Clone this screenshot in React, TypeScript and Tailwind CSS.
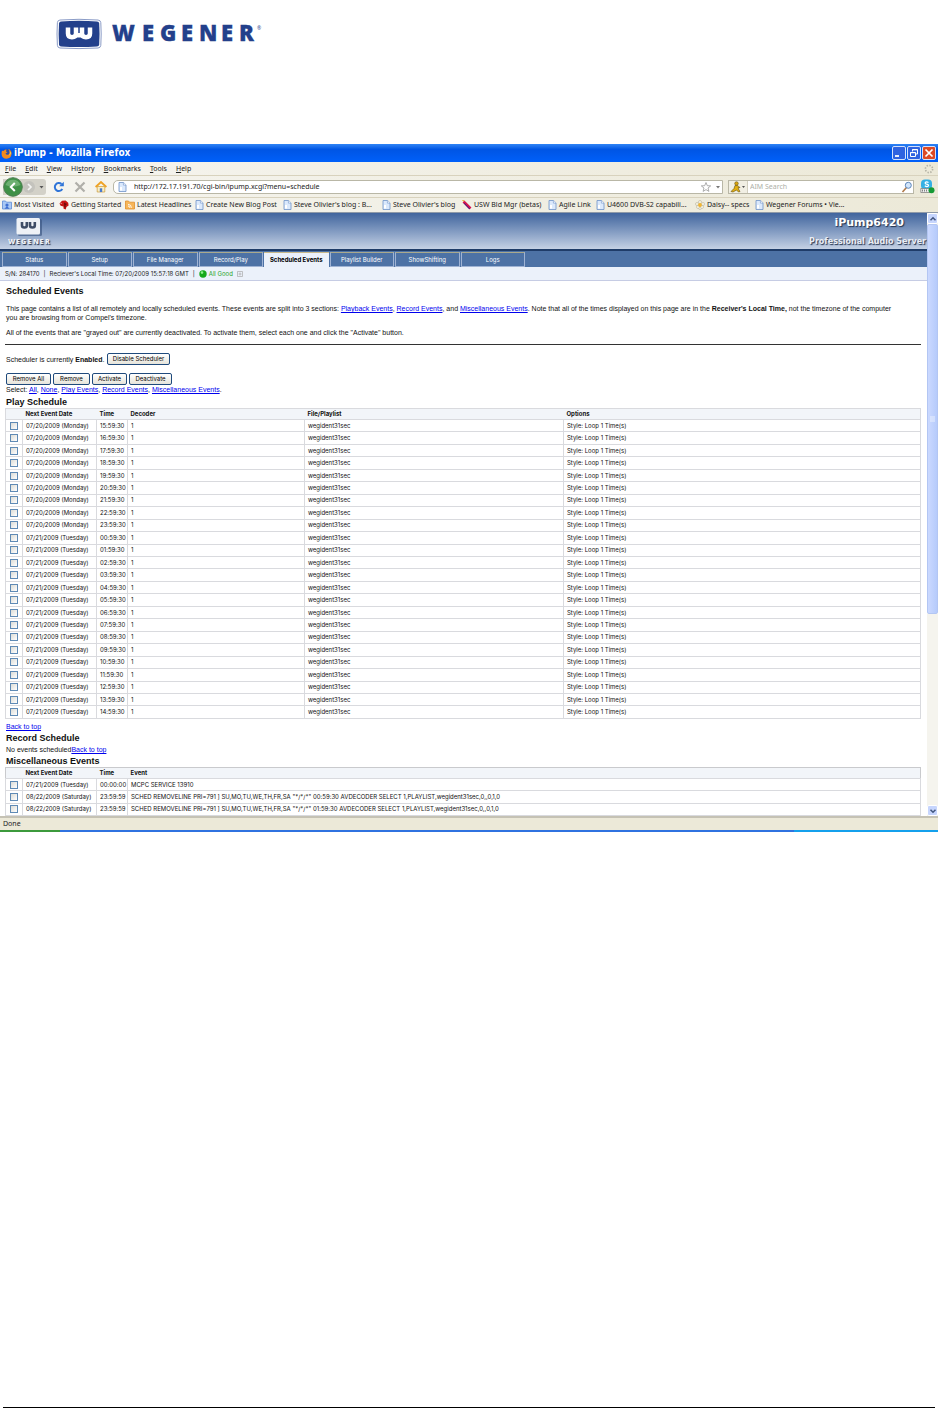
import type { ReactNode } from "react";

const menus = [
  { before: "", key: "F", after: "ile" },
  { before: "", key: "E", after: "dit" },
  { before: "", key: "V", after: "iew" },
  { before: "Hi", key: "s", after: "tory" },
  { before: "", key: "B", after: "ookmarks" },
  { before: "", key: "T", after: "ools" },
  { before: "", key: "H", after: "elp" },
];

const tabs = ["Status", "Setup", "File Manager", "Record/Play", "Scheduled Events", "Playlist Builder", "ShowShifting", "Logs"];

const playEvents = Array.from({ length: 24 }, (_, i) => {
  const hour = (15 + i) % 24;
  return {
    id: i,
    date: i < 9 ? "07/20/2009 (Monday)" : "07/21/2009 (Tuesday)",
    time: `${String(hour).padStart(2, "0")}:59:30`,
  };
});

const miscEvents = [
  { date: "07/21/2009 (Tuesday)", time: "00:00:00", event: "MCPC SERVICE 13910" },
  {
    date: "08/22/2009 (Saturday)",
    time: "23:59:59",
    event: 'SCHED REMOVELINE PRI=791 ] SU,MO,TU,WE,TH,FR,SA "*/*/*" 00:59:30 AVDECODER SELECT 1,PLAYLIST,wegident31sec,0,,0,1,0',
  },
  {
    date: "08/22/2009 (Saturday)",
    time: "23:59:59",
    event: 'SCHED REMOVELINE PRI=791 ] SU,MO,TU,WE,TH,FR,SA "*/*/*" 01:59:30 AVDECODER SELECT 1,PLAYLIST,wegident31sec,0,,0,1,0',
  },
];

function PageIcon() {
  return (
    <svg viewBox="0 0 9 10" className="h-[10px] w-[9px] shrink-0">
      <path d="M1 .5h4.6L8 2.9v6.6H1z" fill="#dbe9fc" stroke="#6f93c8" strokeWidth=".8" />
      <path d="M5.4.6v2.5H8" fill="#fff" stroke="#6f93c8" strokeWidth=".6" />
      <path d="M2 5h2v3.6H2z" fill="#fff" />
    </svg>
  );
}

function FolderIcon() {
  return (
    <svg viewBox="0 0 10 10" className="h-[10px] w-[10px] shrink-0">
      <path d="M.5 1h3l1 1.2h5V9h-9z" fill="#a9c8f5" stroke="#5b8bd6" strokeWidth=".8" />
      <circle cx="5" cy="5" r="1.6" fill="#3f6fd0" />
      <path d="M2.5 8.8 5 6l2.5 2.8z" fill="#3f6fd0" />
    </svg>
  );
}

function DinoIcon() {
  return (
    <svg viewBox="0 0 10 10" className="h-[10px] w-[10px] shrink-0">
      <path d="M.5 3.4 3 .8 6.6.6l2.6 2.2.4 2.6L7.4 7l-.6 2.4L4.6 8.8 4.4 6.4 1.6 5.8z" fill="#c81414" />
      <path d="M5 2.5 8 4 6.5 5.2 6.8 7.5 5.4 7.4 5.2 5z" fill="#6a0c0c" />
      <path d="M1.5 3.4h1.6" stroke="#fff" strokeWidth=".5" />
    </svg>
  );
}

function FeedIcon() {
  return (
    <svg viewBox="0 0 10 10" className="h-[10px] w-[10px] shrink-0">
      <path d="M.5 1h3l1 1.2h5V9h-9z" fill="#f7b65a" stroke="#e0902e" strokeWidth=".8" />
      <path d="M3 4.4a3.4 3.4 0 0 1 3.4 3.4M3 6a1.8 1.8 0 0 1 1.8 1.8" fill="none" stroke="#fff" strokeWidth=".9" />
    </svg>
  );
}

function PenIcon() {
  return (
    <svg viewBox="0 0 10 10" className="h-[10px] w-[10px] shrink-0">
      <path d="M1.5 1.5 8.5 8.5" stroke="#d4124e" strokeWidth="2.6" />
      <path d="M2 3.2 7.6 9" stroke="#2b1a8c" strokeWidth="1" />
      <path d="M.4.4 2.4 1" stroke="#e6a51e" strokeWidth="1" />
    </svg>
  );
}

function FlowerIcon() {
  return (
    <svg viewBox="0 0 10 10" className="h-[10px] w-[10px] shrink-0">
      <g fill="#fbf8ea" stroke="#a8a48c" strokeWidth=".5">
        <circle cx="5" cy="2" r="1.5" />
        <circle cx="5" cy="8" r="1.5" />
        <circle cx="2" cy="4" r="1.5" />
        <circle cx="8" cy="4" r="1.5" />
        <circle cx="3" cy="7" r="1.5" />
        <circle cx="7" cy="7" r="1.5" />
      </g>
      <circle cx="5" cy="5" r="1.9" fill="#f2b632" />
    </svg>
  );
}

const bookmarks = [
  { label: "Most Visited", icon: <FolderIcon />, width: "w-[57px]" },
  { label: "Getting Started", icon: <DinoIcon />, width: "w-[66px]" },
  { label: "Latest Headlines", icon: <FeedIcon />, width: "w-[70px]" },
  { label: "Create New Blog Post", icon: <PageIcon />, width: "w-[88px]" },
  { label: "Steve Olivier's blog : B...", icon: <PageIcon />, width: "w-[99px]" },
  { label: "Steve Olivier's blog", icon: <PageIcon />, width: "w-[80px]" },
  { label: "USW Bld Mgr (betas)", icon: <PenIcon />, width: "w-[86px]" },
  { label: "Agile Link", icon: <PageIcon />, width: "w-[48px]" },
  { label: "U4600 DVB-S2 capabili...", icon: <PageIcon />, width: "w-[99px]" },
  { label: "Daisy-- specs", icon: <FlowerIcon />, width: "w-[60px]" },
  { label: "Wegener Forums • Vie...", icon: <PageIcon />, width: "w-[99px]" },
];

function Logo() {
  return (
    <svg viewBox="0 0 206 30" className="h-[30px] w-[206px] overflow-visible" role="img" aria-label="Wegener">
      <path d="M3 1Q22-.4 41 1q2.600.2 2.800 2.600.8 11.400 0 22.800Q43.600 28.800 41 29 22 30.200 3 29 .6 28.800.4 26.400-.4 15 .4 3.600.6 1.200 3 1z" fill="#fff" stroke="#7d90bf" strokeWidth=".9" />
      <path d="M4 2.500Q22 1.200 40 2.500q2 .2 2.200 2 .7 10.500 0 21-.2 1.900-2.200 2.100Q22 28.600 4 27.600 2.200 27.400 2 25.500 1.300 15 2 4.500 2.200 2.700 4 2.500z" fill="#23408b" />
      <g fill="none" stroke="#fff" strokeWidth="4.500">
        <path d="M11 8.500v6q0 3.700 4 3.700t4-3.700v-6" />
        <path d="M25 8.500v6q0 3.700 4 3.700t4-3.700v-6" />
      </g>
      <path d="M19 14h6v4.500h-6z" fill="#fff" />
      <text
        x="55 85 103 124 142 164 182"
        y="22"
        fill="#23408b"
        stroke="#23408b"
        strokeWidth=".3"
        fontFamily="Open Sans, Noto Sans, sans-serif"
        fontWeight="800"
        fontSize="22"
      >
        WEGENER
      </text>
      <text x="200" y="11" fill="#23408b" fontFamily="Open Sans, sans-serif" fontSize="5">
        ®
      </text>
    </svg>
  );
}

function FirefoxIcon() {
  return (
    <svg viewBox="0 0 11 11" className="h-[11px] w-[11px]">
      <circle cx="5.5" cy="5.5" r="4.3" fill="#2b4fa8" />
      <path d="M1 2.500Q2.500 3.500 3 2.600q1-1.400 2.500-1.200L5 3.500l1.500 1-2 .8q.6 1.900 2.500 1.500 2.200-.8 1.500-3.800Q7.800 1.500 7 .8q3.600 1.400 3.600 5Q10 10.600 5.500 10.700 1 10.500.6 6.200.5 4 1 2.500z" fill="#f08a1d" />
      <path d="M8.500 3q1 3-1 4.500 2.600-.4 2.500-3z" fill="#fbd04a" />
    </svg>
  );
}

function WindowButton({ label, color, children }: { label: string; color: string; children: ReactNode }) {
  return (
    <button aria-label={label} className={`flex h-[14px] w-[14px] items-center justify-center rounded-[2px] border border-[#d5e1fb] ${color}`}>
      <svg viewBox="0 0 12 12" className="h-3 w-3" fill="none" stroke="#fff">
        {children}
      </svg>
    </button>
  );
}

function TitleBar() {
  return (
    <div className="flex h-[18px] items-center bg-linear-to-b from-[#2f84f5] via-[#0055e4] via-30% to-[#0060fa] px-px">
      <FirefoxIcon />
      <h1 className="ml-[2px] flex-1 font-['DejaVu_Sans_Condensed','DejaVu_Sans',sans-serif] text-[10px] font-bold text-white">iPump - Mozilla Firefox</h1>
      <div className="flex gap-px pr-px">
        <WindowButton label="Minimize" color="bg-[#2f63e0]">
          <path d="M2 9h4" strokeWidth="1.8" />
        </WindowButton>
        <WindowButton label="Restore" color="bg-[#2f63e0]">
          <path d="M4.5 4.500v-2h5v4.500h-2M2.500 5.500h5v4h-5zM4.500 2.800h5M2.500 5.700h5" />
        </WindowButton>
        <WindowButton label="Close" color="bg-[#dd4a25]">
          <path d="m2.500 2.500 7 7m0-7-7 7" strokeWidth="1.7" />
        </WindowButton>
      </div>
    </div>
  );
}

function MenuBar() {
  return (
    <div className="flex h-[14px] items-center justify-between border-b border-[#d8d2bd] pr-1 pl-[5px]">
      <div className="flex gap-[9px]">
        {menus.map((menu) => (
          <button key={menu.key + menu.after}>
            {menu.before}
            <u>{menu.key}</u>
            {menu.after}
          </button>
        ))}
      </div>
      <svg viewBox="0 0 10 10" className="h-[10px] w-[10px]">
        <circle cx="5" cy="5" r="3.6" fill="none" stroke="#b5b3a6" strokeWidth="1.6" strokeDasharray="1.4 1.42" />
      </svg>
    </div>
  );
}

function NavBar() {
  return (
    <div className="flex h-[22px] items-center border-b border-[#d8d2bd] px-[3px]">
      <div className="flex h-4 w-[43px] items-center rounded-r-[3px] bg-[#d3d1c8]">
        <button aria-label="Back">
          <svg viewBox="0 0 20 20" className="h-5 w-5">
            <circle cx="10" cy="10" r="9.3" fill="#3f9147" stroke="#4d7d50" />
            <path d="M2.500 8A8 8 0 0 1 17.500 8Q10 11 2.500 8z" fill="#8cc48d" opacity=".6" />
            <path d="m11.800 6-4 4 4 4" fill="none" stroke="#fff" strokeWidth="2" />
          </svg>
        </button>
        <button aria-label="Forward">
          <svg viewBox="0 0 14 14" className="h-[14px] w-[14px]">
            <circle cx="6" cy="7" r="6" fill="#c4c3bd" />
            <path d="m5 4 3 3-3 3" fill="none" stroke="#f4f4f2" strokeWidth="1.7" />
          </svg>
        </button>
        <button aria-label="Recent pages">
          <svg viewBox="0 0 8 8" className="h-2 w-2">
            <path d="M2.500 3h4l-2 2.500z" fill="#555" />
          </svg>
        </button>
      </div>
      <div className="flex items-center gap-[9px] pl-[7px]">
        <button aria-label="Reload">
          <svg viewBox="0 0 12 12" className="h-3 w-3">
            <path d="M9.300 8A4 4 0 1 1 8.500 3" fill="none" stroke="#2f74d8" strokeWidth="2" />
            <path d="M10.800.8v4.500H6.200z" fill="#2f74d8" />
          </svg>
        </button>
        <button aria-label="Stop">
          <svg viewBox="0 0 12 12" className="h-3 w-3">
            <path d="m1.500 1.500 9 9m0-9-9 9" stroke="#b0afa9" strokeWidth="2.2" />
          </svg>
        </button>
        <button aria-label="Home">
          <svg viewBox="0 0 12 12" className="h-3 w-3">
            <path d="M2.200 5.500h7.600V11H2.200z" fill="#fbeec2" stroke="#c99a3a" strokeWidth=".7" />
            <path d="M.6 6 6 1l5.400 5" fill="none" stroke="#efa224" strokeWidth="1.8" />
            <path d="M4.800 7.300h2.400V11H4.800z" fill="#4a7bcf" />
          </svg>
        </button>
      </div>
      <div className="ml-[6px] flex h-[14px] flex-1 items-center rounded-l-[5px] border border-[#b9b7a6] bg-white pl-1">
        <PageIcon />
        <input
          aria-label="Address"
          defaultValue="http://172.17.191.70/cgi-bin/ipump.xcgi?menu=schedule"
          className="ml-[7px] h-[12px] flex-1 bg-transparent outline-none"
        />
        <svg viewBox="0 0 22 12" className="h-3 w-[22px]">
          <path d="m6 1.500 1.300 3.200 3.400.2L8 7l.9 3.400L6 8.600 3.100 10.400 4 7 1.300 4.900l3.400-.2z" fill="#fff" stroke="#999" strokeWidth=".8" />
          <path d="M16 5h4l-2 2.500z" fill="#777" />
        </svg>
      </div>
      <div className="ml-[5px] flex h-[14px] w-[186px] items-center border border-[#b9b7a6] bg-white">
        <span className="flex h-full items-center border-r border-[#d2cfc0] bg-[#f1efe4]">
          <svg viewBox="0 0 18 12" className="h-3 w-[18px]">
            <circle cx="7.500" cy="2.500" r="1.8" fill="#d9a50f" stroke="#5e4a0a" strokeWidth=".5" />
            <path d="m6 4.500 3 .2 2 2-1.800-.2.300 1.500 1.500 2.500-1.500.5L7.500 9 4 11l-2-.5 3-3z" fill="#e3b012" stroke="#5e4a0a" strokeWidth=".6" />
            <path d="M13 5h3l-1.500 2z" fill="#555" />
          </svg>
        </span>
        <input aria-label="Search" placeholder="AIM Search" className="h-[12px] w-0 flex-1 bg-transparent px-[2px] outline-none placeholder:text-[#aeb0a8]" />
        <svg viewBox="0 0 12 12" className="h-3 w-3">
          <path d="M5.500 6.500 1.500 11" stroke="#b07a4a" strokeWidth="1.6" />
          <circle cx="7.300" cy="4.300" r="3" fill="#d3e6fb" stroke="#5c86bb" strokeWidth="1" />
        </svg>
      </div>
      <svg viewBox="0 0 15 15" className="ml-[6px] h-[15px] w-[15px]">
        <rect x="1" y=".5" width="11" height="10" rx="4" fill="#35b0e4" />
        <path d="M8.500 3.600Q6.500 2.300 5.300 3.500q-.5 1.300 1.500 1.700 2.300.5 1.500 1.800Q7 8.200 4.800 6.800" fill="none" stroke="#fff" strokeWidth="1.2" />
        <path d="M.8 9.500h9v4h-9z" fill="#eee" stroke="#777" strokeWidth=".7" />
        <path d="M2.500 10.500v2m2-2v2m2-2v2" stroke="#555" strokeWidth=".7" />
        <circle cx="11.500" cy="11.300" r="3" fill="#169a35" />
      </svg>
    </div>
  );
}

function BookmarksBar() {
  return (
    <nav className="flex h-[15px] items-center overflow-hidden border-b border-[#8f9aa8] px-[2px] whitespace-nowrap">
      {bookmarks.map((bookmark) => (
        <a key={bookmark.label} href="#" className={`flex shrink-0 items-center gap-[2px] ${bookmark.width}`}>
          {bookmark.icon}
          <span>{bookmark.label}</span>
        </a>
      ))}
    </nav>
  );
}

function SiteHeader() {
  return (
    <header className="flex h-9 items-start justify-between bg-linear-to-b from-[#41659d] to-[#c5d1e4]">
      <svg viewBox="0 0 58 36" className="h-9 w-[58px]" role="img" aria-label="Wegener">
        <rect x="18" y="6" width="24" height="17" rx="1.5" fill="#35507c" opacity=".6" />
        <rect x="16.500" y="5" width="23.500" height="16.500" rx="1.5" fill="#eef1f6" />
        <g fill="none" stroke="#3e4c66" strokeWidth="2.600">
          <path d="M22 9v3.500q0 2 2.400 2t2.400-2V9" />
          <path d="M30 9v3.500q0 2 2.400 2t2.400-2V9" />
        </g>
        <g fontFamily="Open Sans, sans-serif" fontWeight="800" fontSize="7">
          <text x="8 16 21 27.5 33 39.5 45" y="31" fill="#eef1f6" className="[text-shadow:1px_1px_1px_#22324e]">
            WEGENER
          </text>
        </g>
      </svg>
      <div className="flex flex-col items-end font-['DejaVu_Sans',sans-serif] font-bold text-white [text-shadow:1px_1px_1px_#22324e]">
        <p className="pt-[3px] pr-[23px] text-[11px] leading-[13px]">iPump6420</p>
        <p className="pt-[8px] pr-px text-[8px] leading-[10px] text-[#e9edf4]">Professional Audio Server</p>
      </div>
    </header>
  );
}

function Tabs() {
  return (
    <nav className="border-t-2 border-[#1f3c68] bg-[#4d72a5]">
      <div className="grid h-4 w-[525px] grid-cols-8 gap-px pt-px pl-[2px]">
        {tabs.map((tab) =>
          tab === "Scheduled Events" ? (
            <a key={tab} href="#" aria-current="page" className="border-t border-[#c9b98a] bg-[#ebf1fa] text-center leading-[13px] font-bold whitespace-nowrap text-black">
              {tab}
            </a>
          ) : (
            <a key={tab} href="#" className="border border-[#9fb3d4] border-t-[#aaa98c] text-center leading-[13px] text-white">
              {tab}
            </a>
          ),
        )}
      </div>
    </nav>
  );
}

function StatusLine() {
  return (
    <div className="flex h-[14px] items-center border-b border-[#c6cce4] bg-[#ebf1fa] px-[5px] text-[#222]">
      <span>S/N: 284170</span>
      <span className="px-[4px]">|</span>
      <span>Reciever's Local Time: 07/20/2009 15:57:18 GMT</span>
      <span className="px-[4px]">|</span>
      <svg viewBox="0 0 8 8" className="h-2 w-2">
        <circle cx="4" cy="4" r="3.7" fill="#16a81a" />
        <circle cx="3" cy="2.6" r="1.3" fill="#8ef08c" />
      </svg>
      <span className="pl-[2px] text-[#28a428]">All Good</span>
      <button aria-label="Details" className="ml-[4px]">
        <svg viewBox="0 0 6 6" className="h-[6px] w-[6px]">
          <path d="M.5.5h5v5h-5zM3 1.500v3M1.500 3h3" fill="none" stroke="#a9a9a9" strokeWidth=".7" />
        </svg>
      </button>
    </div>
  );
}

function Button({ className, children }: { className: string; children: ReactNode }) {
  return (
    <button className={`h-3 rounded-[2px] border border-[#1f4a7c] bg-linear-to-b from-white to-[#e6e4da] text-center font-['Inter','Liberation_Sans',sans-serif] text-[6px] leading-[10px] text-black ${className}`}>
      {children}
    </button>
  );
}

function Link({ href, children }: { href: string; children: ReactNode }) {
  return (
    <a href={href} className="text-[#0000ee] underline">
      {children}
    </a>
  );
}

function RowCheck({ label }: { label: string }) {
  return (
    <td className="border border-[#d9dade] p-0">
      <input type="checkbox" aria-label={label} className="mx-auto block h-2 w-2 appearance-none border border-[#5f8ab5] bg-linear-to-br from-[#dcdcd6] to-white" />
    </td>
  );
}

function Cell({ children }: { children: ReactNode }) {
  return <td className="border border-[#d9dade] px-[3px] py-0 leading-[10px] whitespace-nowrap">{children}</td>;
}

function HeadCell({ className = "", children }: { className?: string; children?: ReactNode }) {
  return <th className={`px-[3px] py-0 text-left leading-[10px] font-bold ${className}`}>{children}</th>;
}

function PlayTable() {
  return (
    <table className="h-[311px] w-full table-fixed border-collapse border border-[#d9dade] font-['Inter','Liberation_Sans',sans-serif] text-[6px]">
      <thead>
        <tr className="bg-[#f2f5f9]">
          <HeadCell className="w-[17px]" />
          <HeadCell className="w-[74px]">Next Event Date</HeadCell>
          <HeadCell className="w-[31px]">Time</HeadCell>
          <HeadCell className="w-[177px]">Decoder</HeadCell>
          <HeadCell className="w-[259px]">File/Playlist</HeadCell>
          <HeadCell>Options</HeadCell>
        </tr>
      </thead>
      <tbody>
        {playEvents.map((event) => (
          <tr key={event.id}>
            <RowCheck label={`${event.date} ${event.time}`} />
            <Cell>{event.date}</Cell>
            <Cell>{event.time}</Cell>
            <Cell>1</Cell>
            <Cell>wegident31sec</Cell>
            <Cell>Style: Loop 1 Time(s)</Cell>
          </tr>
        ))}
      </tbody>
    </table>
  );
}

function MiscTable() {
  return (
    <table className="h-[49px] w-full table-fixed border-collapse border border-b-0 border-[#c9cacd] font-['Inter','Liberation_Sans',sans-serif] text-[6px]">
      <thead>
        <tr className="bg-[#f2f5f9]">
          <HeadCell className="w-[17px]" />
          <HeadCell className="w-[74px]">Next Event Date</HeadCell>
          <HeadCell className="w-[31px]">Time</HeadCell>
          <HeadCell>Event</HeadCell>
        </tr>
      </thead>
      <tbody>
        {miscEvents.map((event) => (
          <tr key={event.event}>
            <RowCheck label={event.event} />
            <Cell>{event.date}</Cell>
            <Cell>{event.time}</Cell>
            <Cell>{event.event}</Cell>
          </tr>
        ))}
      </tbody>
    </table>
  );
}

function ScrollBar() {
  return (
    <div className="flex w-[11px] shrink-0 flex-col bg-[#f5f4ee]">
      <button aria-label="Scroll up" className="flex h-[11px] items-center justify-center rounded-[2px] border border-white bg-[#c6d5fd]">
        <svg viewBox="0 0 8 8" className="h-2 w-2">
          <path d="m1.500 5.300 2.500-2.500 2.500 2.500" fill="none" stroke="#43577f" strokeWidth="1.5" />
        </svg>
      </button>
      <div className="flex h-[390px] items-center justify-center rounded-[2px] border border-[#b3c6f3] bg-linear-to-r from-[#cbd9ff] to-[#b6cbfb]">
        <svg viewBox="0 0 5 6" className="h-[6px] w-[5px]">
          <path d="M0 1h5M0 3h5M0 5h5" stroke="#eef4fe" strokeWidth=".9" />
        </svg>
      </div>
      <button aria-label="Scroll down" className="mt-auto flex h-[11px] items-center justify-center rounded-[2px] border border-white bg-[#c6d5fd]">
        <svg viewBox="0 0 8 8" className="h-2 w-2">
          <path d="m1.500 2.800 2.500 2.500 2.500-2.500" fill="none" stroke="#43577f" strokeWidth="1.5" />
        </svg>
      </button>
    </div>
  );
}

function ScheduledEvents() {
  return (
    <main className="bg-white pt-[5px] pr-[6px] pl-[5px] font-['Liberation_Sans',Arial,sans-serif] text-[7px] leading-[9px] text-[#111]">
      <h2 className="pl-px text-[9px] leading-[11px] font-bold">Scheduled Events</h2>
      <p className="mt-[7px] pl-px">
        This page contains a list of all remotely and locally scheduled events. These events are split into 3 sections: <Link href="#play">Playback Events</Link>,{" "}
        <Link href="#record">Record Events</Link>, and <Link href="#misc">Miscellaneous Events</Link>. Note that all of the times displayed on this page are in the{" "}
        <b>Receiver's Local Time,</b> not the timezone of the computer
        <br />
        you are browsing from or Compel's timezone.
      </p>
      <p className="mt-[6px] pl-px">All of the events that are "grayed out" are currently deactivated. To activate them, select each one and click the "Activate" button.</p>
      <hr className="mt-[7px] border-[#333]" />
      <div className="mt-2 flex h-3 items-center pl-px">
        <span className="w-[101px] whitespace-nowrap">
          Scheduler is currently <b>Enabled</b>.
        </span>
        <Button className="w-[63px]">Disable Scheduler</Button>
      </div>
      <div className="mt-2 flex gap-[2px] pl-px">
        <Button className="w-[45px]">Remove All</Button>
        <Button className="w-[37px]">Remove</Button>
        <Button className="w-[35px]">Activate</Button>
        <Button className="w-[43px]">Deactivate</Button>
      </div>
      <p className="pl-px leading-[10px]">
        Select: <Link href="#all">All</Link>, <Link href="#none">None</Link>, <Link href="#play">Play Events</Link>, <Link href="#record">Record Events</Link>,{" "}
        <Link href="#misc">Miscellaneous Events</Link>.
      </p>

      <h3 id="play" className="mt-[2px] pl-px text-[9px] leading-[11px] font-bold">
        Play Schedule
      </h3>
      <PlayTable />
      <p className="mt-[3px] pl-px">
        <Link href="#top">Back to top</Link>
      </p>

      <h3 id="record" className="mt-[2px] pl-px text-[9px] leading-[11px] font-bold">
        Record Schedule
      </h3>
      <p className="mt-px pl-px">
        No events scheduled<Link href="#top">Back to top</Link>
      </p>

      <h3 id="misc" className="mt-[2px] pl-px text-[9px] leading-[11px] font-bold">
        Miscellaneous Events
      </h3>
      <MiscTable />
    </main>
  );
}

export default function App() {
  return (
    <div id="top" className="flex min-h-screen flex-col bg-white">
      <div className="pt-[19px] pl-[57px]">
        <Logo />
      </div>

      <section className="mt-[95px] bg-[#ece9d8] font-['Noto_Sans',sans-serif] text-[7px] leading-[10px] text-[#222]">
        <TitleBar />
        <div className="bg-linear-to-r from-[#f6f5f0] to-[#ece9d8]">
          <MenuBar />
          <NavBar />
          <BookmarksBar />
        </div>
        <div className="flex">
          <div className="min-w-0 flex-1 font-['Inter','Liberation_Sans',sans-serif] text-[6px]">
            <SiteHeader />
            <Tabs />
            <StatusLine />
            <ScheduledEvents />
          </div>
          <ScrollBar />
        </div>
        <div className="flex h-[14px] items-center border-t-2 border-[#c5c2b4] px-[3px]">Done</div>
        <div className="flex h-[2px]">
          <span className="w-[60px] bg-[#3c9a3c]" />
          <span className="flex-1 bg-[#2f72e0]" />
          <span className="w-[144px] bg-[#14a0ec]" />
        </div>
      </section>

      <footer className="mx-[3px] mt-auto border-b border-black" />
    </div>
  );
}
